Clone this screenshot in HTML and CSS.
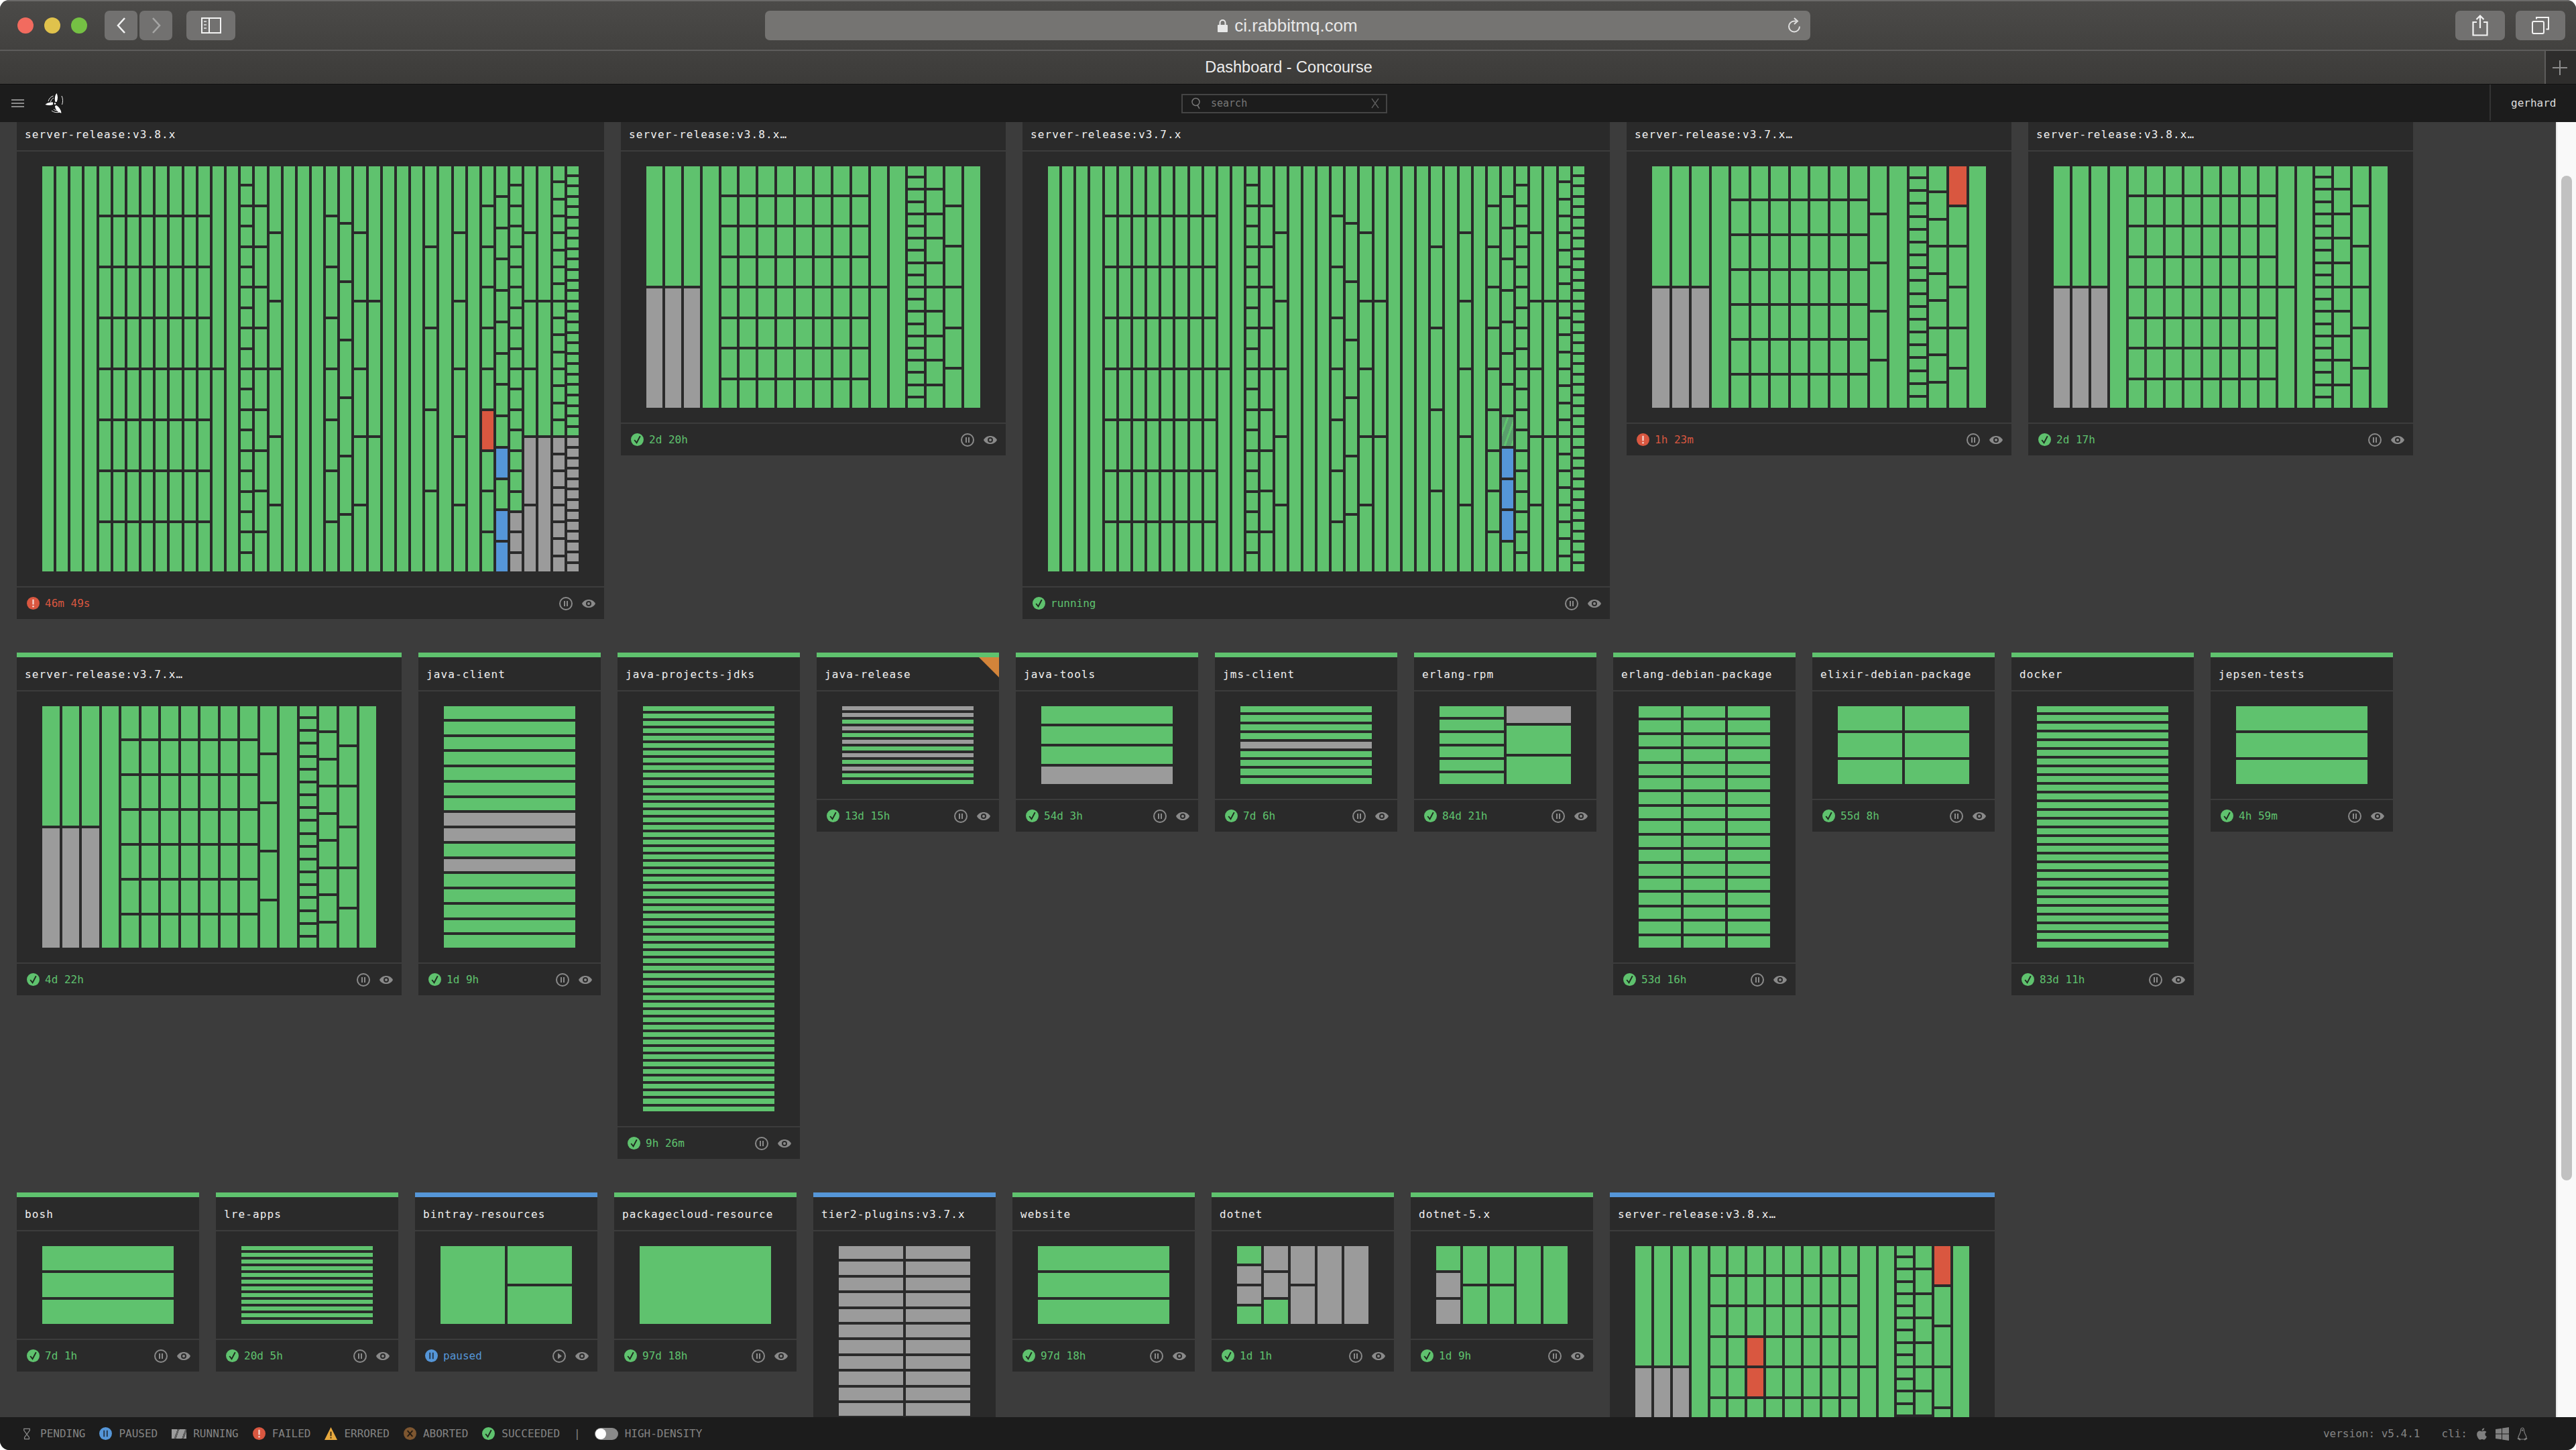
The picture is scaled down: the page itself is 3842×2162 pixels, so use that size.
FILE: index.html
```html
<!DOCTYPE html>
<html lang="en">
<head>
    <meta charset="UTF-8">
    <title>Dashboard - Concourse</title>
    <link rel="stylesheet" href="styles.css">
</head>
<body>
    <svg class="sprites" aria-hidden="true">
        <symbol id="i-ok" viewBox="0 0 20 20"><circle cx="10" cy="10" r="10" fill="#5fc26e"/><path d="M5.5 10.5 9 15 14.5 4.5" fill="none" stroke="#1f2a20" stroke-width="2"/></symbol>
        <symbol id="i-fail" viewBox="0 0 20 20"><circle cx="10" cy="10" r="10" fill="#d95740"/><rect x="8.8" y="4" width="2.4" height="8" fill="#f3d5cf"/><circle cx="10" cy="15" r="1.4" fill="#f3d5cf"/></symbol>
        <symbol id="i-paused" viewBox="0 0 20 20"><circle cx="10" cy="10" r="10" fill="#5596d8"/><rect x="6.6" y="5" width="2" height="10" fill="#24364a"/><rect x="11.4" y="5" width="2" height="10" fill="#24364a"/></symbol>
        <symbol id="i-abort" viewBox="0 0 20 20"><circle cx="10" cy="10" r="10" fill="#7d5630"/><path d="M6 5.5 14 14.5M14 5.5 6 14.5" stroke="#221a12" stroke-width="2"/></symbol>
        <symbol id="i-warn" viewBox="0 0 20 20"><path d="M10 0 20 20H0z" fill="#e8a93e"/><rect x="9" y="7" width="2" height="7" fill="#33260f"/><rect x="9" y="15.5" width="2" height="2" fill="#33260f"/></symbol>
        <symbol id="i-pause" viewBox="0 0 20 20"><circle cx="10" cy="10" r="9" fill="none" stroke="#8a8a8a" stroke-width="2"/><rect x="7" y="6" width="2" height="8" fill="#8a8a8a"/><rect x="11" y="6" width="2" height="8" fill="#8a8a8a"/></symbol>
        <symbol id="i-play" viewBox="0 0 20 20"><circle cx="10" cy="10" r="9" fill="none" stroke="#8a8a8a" stroke-width="2"/><path d="M8 5.5 14 10 8 14.5z" fill="#8a8a8a"/></symbol>
        <symbol id="i-eye" viewBox="0 0 20 14"><path d="M0 7C4-1 16-1 20 7 16 15 4 15 0 7z" fill="#8a8a8a"/><circle cx="10" cy="7" r="4" fill="#2a2a2a"/><circle cx="10" cy="7" r="2" fill="#8a8a8a"/></symbol>
    </svg>

    <div class="window">
        <div class="chrome">
            <div class="toolbar">
                <div class="lights">
                    <span class="light light-red"></span>
                    <span class="light light-yellow"></span>
                    <span class="light light-green"></span>
                </div>
                <div class="nav">
                    <span class="btn btn-nav"><svg width="16" height="26" viewBox="0 0 16 26"><path d="M13 2 3 13l10 11" fill="none" stroke="#f2f2f2" stroke-width="2.6"/></svg></span>
                    <span class="btn btn-nav"><svg width="16" height="26" viewBox="0 0 16 26"><path d="M3 2l10 11L3 24" fill="none" stroke="#a5a5a4" stroke-width="2.6"/></svg></span>
                </div>
                <span class="btn btn-sidebar"><svg width="30" height="26" viewBox="0 0 30 26"><rect x="1" y="2" width="28" height="22" fill="none" stroke="#f2f2f2" stroke-width="2"/><path d="M12 2v22" stroke="#f2f2f2" stroke-width="2"/><path d="M4 7h4M4 12h4M4 17h4" stroke="#c8c8c8" stroke-width="2"/></svg></span>
                <div class="url">
                    <div class="url-text">
                        <svg width="15" height="20" viewBox="0 0 15 20"><path d="M3.5 9V6a4 4 0 0 1 8 0v3" fill="none" stroke="#e8e8e8" stroke-width="2"/><rect y="9" width="15" height="11" rx="1" fill="#e8e8e8"/></svg>
                        <span>ci.rabbitmq.com</span>
                    </div>
                    <svg class="reload" width="22" height="24" viewBox="0 0 22 24"><path d="M19 13.5a8 8 0 1 1-8-8h3" fill="none" stroke="#e0e0e0" stroke-width="2"/><path d="M11 1l5 4.5-5 4.5" fill="none" stroke="#e0e0e0" stroke-width="2"/></svg>
                </div>
                <span class="btn btn-action"><svg width="24" height="32" viewBox="0 0 24 32"><path d="M7 11H1.5v19.5h21V11H17" fill="none" stroke="#f2f2f2" stroke-width="2.2"/><path d="M12 20V1.5M6.5 7 12 1.5 17.5 7" fill="none" stroke="#f2f2f2" stroke-width="2.2"/></svg></span>
                <span class="btn btn-action"><svg width="26" height="26" viewBox="0 0 26 26"><rect x="1" y="7" width="17" height="18" rx="2" fill="none" stroke="#f2f2f2" stroke-width="2"/><path d="M7 3.5V1h18v17.5h-3.5" fill="none" stroke="#f2f2f2" stroke-width="2"/></svg></span>
            </div>
            <div class="tabbar">
                <div class="tab-title">Dashboard - Concourse</div>
                <div class="tab-new"><svg width="22" height="22" viewBox="0 0 22 22"><path d="M11 0v22M0 11h22" stroke="#8c8c8c" stroke-width="2"/></svg></div>
            </div>
        </div>

        <header class="appbar">
            <div class="appbar-left">
                <div class="burger"><span></span><span></span><span></span></div>
                <svg class="logo" width="30" height="30" viewBox="0 0 30 30">
                    <path d="M15.5 13C14 8 15 3 17.5 0c2 4 2 9 0 13z" fill="#fff"/>
                    <path d="M12 17C8 18.5 4 18 .5 17c1.500-2 6-4 11.500-3.500z" fill="#fff"/>
                    <path d="M17 18c5 3 7 7.500 7.500 11.500C20 29 15 24.500 15 19z" fill="#fff"/>
                    <circle cx="15" cy="15.500" r="1.300" fill="#fff"/>
                    <path d="M5 12C6 8 9 5 12.500 4M8.500 13C9 10 11 8 13 7M25 4c2 4 2 9 .5 13M10 26c3 2.500 7 3 11 2.500M13 24c2 1.500 4 2 7 2" fill="none" stroke="#e8e8e8" stroke-width="1"/>
                </svg>
            </div>
            <div class="search">
                <svg width="14" height="18" viewBox="0 0 14 18"><circle cx="6.500" cy="7" r="5.500" fill="none" stroke="#777" stroke-width="1.500"/><path d="M9 12l3 5" stroke="#777" stroke-width="1.500"/></svg>
                <span class="search-text">search</span>
                <svg width="12" height="16" viewBox="0 0 12 16"><path d="M1 1l10 14M11 1 1 15" stroke="#5e5e5e" stroke-width="1.300"/></svg>
            </div>
            <div class="user">gerhard</div>
        </header>

        <main class="viewport">
            <div class="board" id="board"></div>
            <div class="scrollbar"><div class="scrollbar-thumb"></div></div>
        </main>

        <footer class="legend">
            <div class="legend-items">
                <span class="legend-item legend-pending">
                    <svg width="12" height="20" viewBox="0 0 14 20"><path d="M2 1h10v3L3 16v3h8v-3L2 4z" fill="none" stroke="#8a8a8a" stroke-width="1.500"/></svg>PENDING
                </span>
                <span class="legend-item"><svg class="legend-icon"><use href="#i-paused"/></svg>PAUSED</span>
                <span class="legend-item"><span class="legend-running"></span>RUNNING</span>
                <span class="legend-item"><svg class="legend-icon"><use href="#i-fail"/></svg>FAILED</span>
                <span class="legend-item"><svg class="legend-icon"><use href="#i-warn"/></svg>ERRORED</span>
                <span class="legend-item"><svg class="legend-icon"><use href="#i-abort"/></svg>ABORTED</span>
                <span class="legend-item"><svg class="legend-icon"><use href="#i-ok"/></svg>SUCCEEDED</span>
                <span>|</span>
                <span class="legend-item"><span class="toggle"><span class="toggle-knob"></span></span>HIGH-DENSITY</span>
            </div>
            <div class="legend-info">
                <span>version: v5.4.1</span>
                <span class="cli">cli:</span>
                <svg class="os-apple" width="17" height="20" viewBox="0 0 384 512"><path fill="#808080" d="M318.700 268.700c-.2-36.700 16.400-64.400 50-84.800-18.800-26.900-47.200-41.700-84.700-44.600-35.500-2.800-74.300 20.700-88.500 20.700-15 0-49.400-19.700-76.400-19.700C63.300 141.200 4 184.800 4 273.500q0 39.300 14.400 81.200c12.800 36.700 59 126.700 107.200 125.200 25.200-.6 43-17.900 75.800-17.900 31.800 0 48.300 17.900 76.400 17.900 48.600-.7 90.400-82.500 102.600-119.300-65.200-30.700-61.700-90-61.700-91.900zm-56.600-164.200c27.300-32.400 24.800-61.900 24-72.500-24.100 1.400-52 16.400-67.900 34.900-17.500 19.800-27.800 44.300-25.600 71.900 26.100 2 49.900-11.400 69.500-34.300z"/></svg>
                <svg class="os-win" width="20" height="20" viewBox="0 0 20 20"><path fill="#808080" d="M0 3l9-1.200V9.500H0zM10 1.600 20 0v9.500H10zM0 10.500h9v7.700L0 17zM10 10.500h10V20l-10-1.600z"/></svg>
                <svg class="os-linux" width="16" height="20" viewBox="0 0 16 20"><path d="M8 1c-2 0-2.500 2-2.500 4S5 8 4 10s-2.500 4-2 6l3 2h6l3-2c.5-2-1-4-2-6s-1.500-3-1.500-5S10 1 8 1z" fill="none" stroke="#808080" stroke-width="1.200"/><path d="M1 16.500l4 2.500M15 16.500 11 19" stroke="#808080" stroke-width="2"/><circle cx="8" cy="4.500" r="1.200" fill="#808080"/></svg>
            </div>
        </footer>
    </div>

    <script src="script.js"></script>
</body>
</html>
```

FILE: styles.css
```css
html, body {
    margin: 0;
    height: 100%;
    background: #fff;
    overflow: hidden;
}
.sprites {
    display: none;
}
.window {
    width: 3842px;
    height: 2162px;
    display: flex;
    flex-direction: column;
    border-radius: 14px;
    overflow: hidden;
    background: #3c3c3c;
}

/* browser chrome */
.chrome {
    background: linear-gradient(#4b4a48, #3c3b39);
    border-top: 2px solid #6b6a69;
}
.toolbar {
    height: 74px;
    display: flex;
    align-items: center;
    padding: 0 16px 0 26px;
    box-sizing: border-box;
    border-bottom: 2px solid #5d5c5b;
}
.lights {
    display: flex;
    gap: 16px;
}
.light {
    width: 24px;
    height: 24px;
    border-radius: 50%;
}
.light-red { background: #f26b5f; }
.light-yellow { background: #e0c24c; }
.light-green { background: #75c044; }
.btn {
    height: 44px;
    background: #727170;
    border-radius: 7px;
    display: flex;
    align-items: center;
    justify-content: center;
}
.nav {
    display: flex;
    gap: 3px;
    margin-left: 26px;
}
.btn-nav { width: 49px; }
.btn-sidebar {
    width: 73px;
    margin-left: 21px;
}
.btn-action { width: 74px; }
.btn-action + .btn-action { margin-left: 16px; }
.url {
    width: 1559px;
    height: 44px;
    margin-left: 790px;
    margin-right: 962px;
    background: #757472;
    border-radius: 7px;
    display: flex;
    align-items: center;
    justify-content: center;
    position: relative;
    font: 26px "Liberation Sans", Arial, sans-serif;
    color: #e8e8e8;
}
.url-text {
    display: flex;
    align-items: center;
    gap: 10px;
}
.reload {
    position: absolute;
    right: 13px;
    top: 10px;
}
.tabbar {
    height: 49px;
    display: flex;
    align-items: stretch;
    border-bottom: 1px solid #111;
}
.tab-title {
    flex: 1;
    display: flex;
    align-items: center;
    justify-content: center;
    font: 23.500px "Liberation Sans", Arial, sans-serif;
    color: #ececec;
    padding-left: 49px;
}
.tab-new {
    width: 47px;
    box-sizing: border-box;
    padding-right: 3px;
    border-left: 2px solid #5d5c5b;
    background: #2e2d2c;
    display: flex;
    align-items: center;
    justify-content: center;
}

/* app header */
.appbar {
    height: 56px;
    background: #1c1c1c;
    display: flex;
    align-items: center;
}
.appbar-left {
    width: 1745px;
    display: flex;
    align-items: center;
    padding-left: 17px;
}
.burger {
    width: 19px;
    display: flex;
    flex-direction: column;
    gap: 3px;
}
.burger span {
    height: 2px;
    background: #8a8a8a;
}
.logo {
    margin-left: 31px;
}
.search {
    width: 307px;
    height: 29px;
    box-sizing: border-box;
    border: 2px solid #444;
    display: flex;
    align-items: center;
    padding: 0 10px 0 13px;
    font: 15px "DejaVu Sans Mono", monospace;
    color: #777;
}
.search-text {
    flex: 1;
    padding-left: 15px;
}
.user {
    margin-left: auto;
    align-self: flex-start;
    width: 129px;
    height: 54px;
    box-sizing: border-box;
    border-left: 2px solid #333;
    font: 16px "DejaVu Sans Mono", monospace;
    color: #dcdcdc;
    display: flex;
    align-items: center;
    padding-left: 30px;
}

/* pipeline board */
.viewport {
    flex: 1;
    display: flex;
    overflow: hidden;
    min-height: 0;
}
.board {
    flex: 1;
    margin-top: -14px;
    padding-left: 25px;
    font-family: "DejaVu Sans Mono", monospace;
}
.row {
    display: flex;
    gap: 25px;
    align-items: flex-start;
    margin-bottom: 50px;
}
.card {
    width: 272px;
    position: relative;
    display: flex;
    flex-direction: column;
    gap: 2px;
}
.card-wide { width: 574px; }
.card-huge { width: 876px; }
.card-head {
    height: 56px;
    box-sizing: border-box;
    background: #2a2a2a;
    border-top: 7px solid #5fc26e;
    display: flex;
    align-items: center;
    padding: 2px 0 0 12px;
    font-size: 16px;
    letter-spacing: 1.100px;
    color: #f0f0f0;
}
.card-blue .card-head { border-top-color: #5596d8; }
.card-flag {
    position: absolute;
    top: 7px;
    right: 0;
    width: 0;
    height: 0;
    border-top: 30px solid #d3843a;
    border-left: 30px solid transparent;
}
.card-body {
    background: #2a2a2a;
    padding: 22px 38px;
}
.card-foot {
    height: 47px;
    background: #2a2a2a;
    display: flex;
    align-items: center;
    padding: 0 13px 0 15px;
    font-size: 16px;
}
.status-icon {
    width: 19px;
    height: 19px;
    margin-right: 8px;
}
.time {
    flex: 1;
}
.time-ok { color: #5fc26e; }
.time-fail { color: #d95740; }
.time-paused { color: #5596d8; }
.act {
    width: 20px;
    height: 20px;
}
.act-eye {
    height: 14px;
    margin-left: 14px;
}

/* treemap */
.map {
    height: 116px;
    display: flex;
    gap: 4px;
}
.map-tall { height: 360px; }
.map-full { height: 604px; }
.map-col {
    flex: 1;
    min-width: 0;
    display: flex;
    flex-direction: column;
    gap: 4px;
}
.cell {
    flex: 1;
    min-height: 0;
}
.cell-s { background: #5fc26e; }
.cell-g { background: #9b9b9b; }
.cell-f { background: #d95740; }
.cell-b { background: #5596d8; }
.cell-h {
    background: #9b9b9b;
    flex: 0 0 25px;
}
.cell-r {
    background: repeating-linear-gradient(110deg, #5a9f6d 0 7px, #5fc26e 7px 10px);
}

/* scrollbar */
.scrollbar {
    width: 30px;
    box-sizing: border-box;
    background: #f9f9f9;
    border-left: 2px solid #e8e8e8;
    padding: 80px 6px 0 6px;
}
.scrollbar-thumb {
    width: 16px;
    height: 1498px;
    background: #c1c1c1;
    border-radius: 8px;
}

/* footer legend */
.legend {
    height: 49px;
    background: #1c1c1c;
    display: flex;
    align-items: center;
    justify-content: space-between;
    padding: 0 72px 0 34px;
    font: 16px "DejaVu Sans Mono", monospace;
    color: #848484;
}
.legend-items {
    display: flex;
    align-items: center;
    gap: 21px;
}
.legend-item {
    display: flex;
    align-items: center;
    gap: 10px;
}
.legend-pending {
    gap: 14px;
}
.legend-icon {
    width: 19px;
    height: 19px;
}
.legend-running {
    width: 22px;
    height: 14px;
    background: repeating-linear-gradient(110deg, #9b9b9b 0 8px, #5e5e5e 8px 11px);
}
.toggle {
    width: 35px;
    height: 18px;
    border-radius: 9px;
    background: #8a8a8a;
    display: flex;
    align-items: center;
}
.toggle-knob {
    width: 16px;
    height: 16px;
    margin-left: 1px;
    border-radius: 50%;
    background: #fff;
}
.legend-info {
    display: flex;
    align-items: center;
}
.cli {
    margin-left: 32px;
    margin-right: 13px;
}
.os-win {
    margin-left: 12px;
}
.os-linux {
    margin-left: 12px;
}
```

FILE: script.js
```js
// column heights of the three treemap layouts used by server-release
const HUGE = [1, 1, 1, 1, 8, 8, 8, 8, 8, 8, 8, 8, 2, 1, 20, 10, 6, 1, 1, 1, 8, 7, 6, 3, 1, 1, 1, 5, 1, 6, 1, 10, 13, 20, 6, 3, 24, 39];
const WIDE7 = [2, 2, 2, 1, 7, 7, 7, 7, 7, 7, 7, 5, 1, 19, 9, 6, 1];
const WIDE8 = [2, 2, 2, 1, 8, 8, 8, 8, 8, 8, 8, 8, 2, 1, 20, 10, 6, 1];

const GRAY_HALF = [[0, 1, 1, 'g'], [1, 1, 1, 'g'], [2, 1, 1, 'g']];

// marks are [column, first cell, last cell, status]
function build(counts, marks) {
    const cols = counts.map((n) => Array(n).fill('s'));
    (marks || []).forEach(([c, from, to, st]) => {
        for (let i = from; i <= to; i++) cols[c][i] = st;
    });
    return cols;
}

// a single column with the listed cells gray
function stripes(n, gray) {
    const col = Array(n).fill('s');
    (gray || []).forEach((i) => { col[i] = 'g'; });
    return [col];
}

const rows = [
    [
        { name: 'server-release:v3.8.x', size: 'huge', time: '46m 49s', state: 'fail', map: 'full',
          cols: build(HUGE, [[31, 6, 6, 'f'], [32, 9, 9, 'b'], [32, 11, 12, 'b'], [33, 17, 19, 'g'], [34, 4, 5, 'g'], [35, 2, 2, 'g'], [36, 16, 23, 'g'], [37, 26, 38, 'g']]) },
        { name: 'server-release:v3.8.x…', size: 'wide', time: '2d 20h', map: 'tall', cols: build(WIDE8, GRAY_HALF) },
        { name: 'server-release:v3.7.x', size: 'huge', time: 'running', map: 'full',
          cols: build(HUGE, [[32, 8, 8, 'r'], [32, 9, 11, 'b']]) },
        { name: 'server-release:v3.7.x…', size: 'wide', time: '1h 23m', state: 'fail', map: 'tall',
          cols: build(WIDE7, GRAY_HALF.concat([[15, 0, 0, 'f']])) },
        { name: 'server-release:v3.8.x…', size: 'wide', time: '2d 17h', map: 'tall', cols: build(WIDE8, GRAY_HALF) },
    ],
    [
        { name: 'server-release:v3.7.x…', size: 'wide', time: '4d 22h', map: 'tall', cols: build(WIDE7, GRAY_HALF) },
        { name: 'java-client', time: '1d 9h', map: 'tall', cols: stripes(16, [7, 8, 10]) },
        { name: 'java-projects-jdks', time: '9h 26m', map: 'full', cols: stripes(55) },
        { name: 'java-release', time: '13d 15h', flag: true, cols: stripes(12, [0, 1, 3, 5, 7, 9]) },
        { name: 'java-tools', time: '54d 3h', cols: stripes(4, [3]) },
        { name: 'jms-client', time: '7d 6h', cols: stripes(9, [4]) },
        { name: 'erlang-rpm', time: '84d 21h', cols: [Array(6).fill('s'), ['h', 's', 's']] },
        { name: 'erlang-debian-package', time: '53d 16h', map: 'tall', cols: build([17, 17, 17]) },
        { name: 'elixir-debian-package', time: '55d 8h', cols: build([3, 3]) },
        { name: 'docker', time: '83d 11h', map: 'tall', cols: stripes(28) },
        { name: 'jepsen-tests', time: '4h 59m', cols: stripes(3) },
    ],
    [
        { name: 'bosh', time: '7d 1h', cols: stripes(3) },
        { name: 'lre-apps', time: '20d 5h', cols: stripes(12) },
        { name: 'bintray-resources', time: 'paused', state: 'paused', blue: true, cols: build([1, 2]) },
        { name: 'packagecloud-resource', time: '97d 18h', cols: stripes(1) },
        // the last row runs under the legend: these two footers are never on screen
        { name: 'tier2-plugins:v3.7.x', time: '', blue: true, map: 'full', cols: [Array(26).fill('g'), Array(26).fill('g')] },
        { name: 'website', time: '97d 18h', cols: stripes(3) },
        { name: 'dotnet', time: '1d 1h', cols: [['s', 'g', 'g', 's'], ['g', 'g', 's'], ['g', 'g'], ['g'], ['g']] },
        { name: 'dotnet-5.x', time: '1d 9h', cols: [['s', 'g', 'g'], ['s', 's'], ['s', 's'], ['s'], ['s']] },
        { name: 'server-release:v3.8.x…', size: 'wide', time: '', blue: true, map: 'tall',
          cols: build(WIDE8, GRAY_HALF.concat([[6, 3, 4, 'f'], [16, 0, 0, 'f']])) },
    ],
];

const STATE_ICON = { ok: 'i-ok', fail: 'i-fail', paused: 'i-paused' };

function renderCard(card) {
    const state = card.state || 'ok';
    const map = card.cols.map((col) =>
        '<div class="map-col">' + col.map((st) => `<div class="cell cell-${st}"></div>`).join('') + '</div>'
    ).join('');
    const action = state === 'paused' ? 'i-play' : 'i-pause';
    return `
        <article class="card ${card.size ? 'card-' + card.size : ''} ${card.blue ? 'card-blue' : ''}">
            <div class="card-head">${card.name}</div>
            ${card.flag ? '<span class="card-flag"></span>' : ''}
            <div class="card-body"><div class="map ${card.map ? 'map-' + card.map : ''}">${map}</div></div>
            <div class="card-foot">
                <svg class="status-icon"><use href="#${STATE_ICON[state]}"/></svg>
                <span class="time time-${state}">${card.time}</span>
                <svg class="act"><use href="#${action}"/></svg>
                <svg class="act act-eye"><use href="#i-eye"/></svg>
            </div>
        </article>`;
}

document.getElementById('board').innerHTML = rows.map((row) =>
    '<section class="row">' + row.map(renderCard).join('') + '</section>'
).join('');
```
